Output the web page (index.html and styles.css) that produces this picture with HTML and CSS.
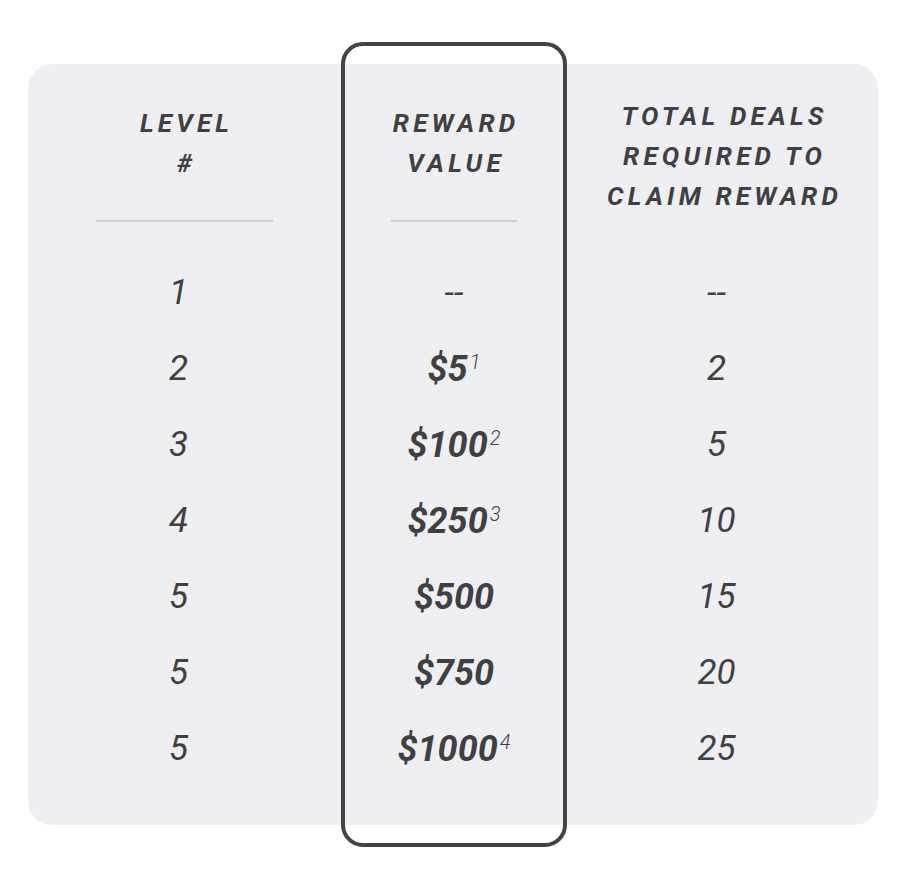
FILE: index.html
```html
<!DOCTYPE html>
<html lang="en">
<head>
<meta charset="utf-8">
<title>Rewards</title>
<link rel="stylesheet" href="styles.css">
</head>
<body>
<div class="page">
  <div class="card">
    <div class="col col-level">
      <div class="head head-two"><div class="head-text">LEVEL<br>#</div></div>
      <div class="rule rule-level"></div>
      <ul class="rows rows-shift">
        <li>1</li><li>2</li><li>3</li><li>4</li><li>5</li><li>5</li><li>5</li>
      </ul>
    </div>
    <div class="col col-reward">
      <div class="head head-two"><div class="head-text">REWARD<br>VALUE</div></div>
      <div class="rule rule-reward"></div>
      <ul class="rows rows-bold">
        <li class="dash">--</li>
        <li>$5<sup class="note">1</sup></li>
        <li>$100<sup class="note">2</sup></li>
        <li>$250<sup class="note">3</sup></li>
        <li>$500</li>
        <li>$750</li>
        <li>$1000<sup class="note">4</sup></li>
      </ul>
    </div>
    <div class="col col-deals">
      <div class="head head-three"><div class="head-text">TOTAL DEALS<br>REQUIRED TO<br>CLAIM REWARD</div></div>
      <div class="rule rule-none"></div>
      <ul class="rows rows-shift">
        <li>--</li><li>2</li><li>5</li><li>10</li><li>15</li><li>20</li><li>25</li>
      </ul>
    </div>
  </div>
</div>
</body>
</html>
```

FILE: styles.css
```css
* { box-sizing: border-box; }
html, body { margin: 0; padding: 0; background: #ffffff; }
body {
  font-family: Roboto, "Liberation Sans", sans-serif;
  color: #404042;
}
.page {
  padding: 42px 32px 45px 28px;
}
.card {
  width: 850px;
  margin-top: 22px;
  background: #efeff3;
  border-radius: 24px;
  display: flex;
  align-items: flex-start;
}
.col {
  display: flex;
  flex-direction: column;
  align-items: center;
  padding-bottom: 38px;
}
.col-level { width: 313px; }
.col-reward {
  width: 226px;
  margin: -22px 0;
  padding: 18px 0 56px;
  border: 4px solid #434345;
  border-radius: 22px;
}
.col-deals { width: 311px; }
.head {
  width: 100%;
  height: 156px;
  text-align: center;
}
.head-two { padding-top: 39px; }
.head-three { padding-top: 32px; }
.head-text {
  font-size: 26px;
  font-weight: 700;
  font-style: italic;
  letter-spacing: 4.2px;
  line-height: 40px;
  padding-left: 4.2px;
}
.rule {
  height: 2px;
  background: #cfcfd3;
}
.rule-level { width: 177px; }
.rule-reward { width: 126px; }
.rule-none { width: 100px; background: transparent; }
.rows {
  list-style: none;
  margin: 33px 0 0;
  padding: 0;
  width: 100%;
}
.rows li {
  height: 76px;
  line-height: 76px;
  font-size: 35px;
  font-style: italic;
  text-align: center;
}
.rows-shift li { padding-right: 12px; }
.rows-bold li { font-weight: 700; font-size: 36px; }
.rows-bold li.dash { font-weight: 400; font-size: 35px; }
.note {
  font-size: 20px;
  font-weight: 300;
  line-height: 0;
  vertical-align: 12px;
  margin-left: 2px;
}
```
